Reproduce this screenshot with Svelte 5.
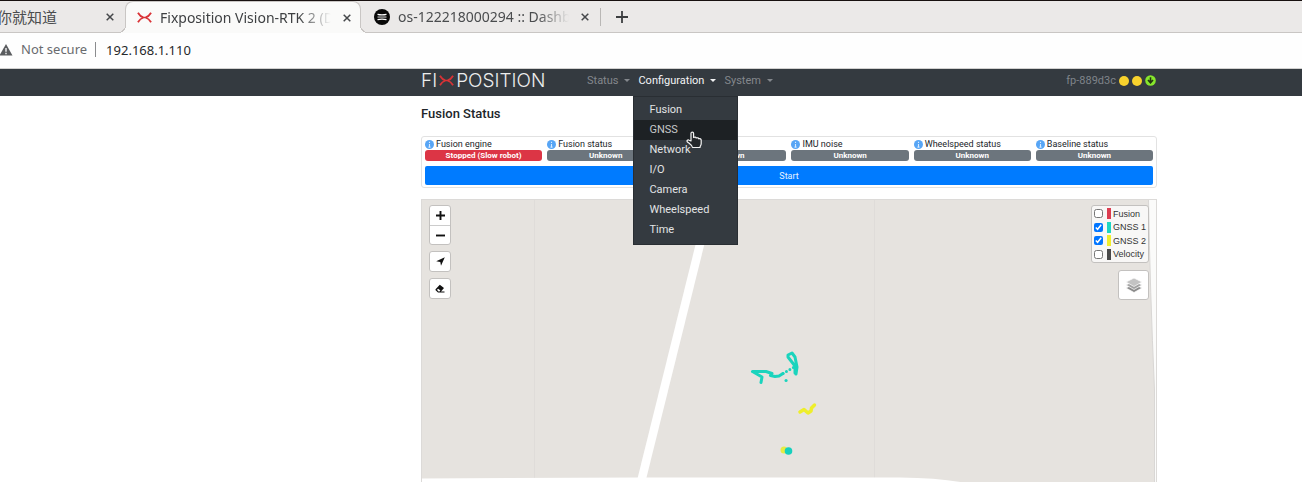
<script>
  const menu = ['Fusion', 'GNSS', 'Network', 'I/O', 'Camera', 'Wheelspeed', 'Time'];
  const cells = [
    { label: 'Fusion engine', value: 'Stopped (Slow robot)', bad: true },
    { label: 'Fusion status', value: 'Unknown' },
    { label: 'IMU bias', value: 'Unknown' },
    { label: 'IMU noise', value: 'Unknown' },
    { label: 'Wheelspeed status', value: 'Unknown' },
    { label: 'Baseline status', value: 'Unknown' }
  ];
  let layers = $state([
    { name: 'Fusion', color: '#dc3d50', on: false },
    { name: 'GNSS 1', color: '#1fd6c1', on: true },
    { name: 'GNSS 2', color: '#f0ee2c', on: true },
    { name: 'Velocity', color: '#494949', on: false }
  ]);
  let active = $state('GNSS');
  let address = $state('192.168.1.110');
</script>

{#snippet cross()}
  <svg width="8" height="8" viewBox="0 0 8 8" aria-hidden="true"><path d="M.7.7l6.6 6.6M7.3.7L.7 7.3" stroke="#45474a" stroke-width="1.5" /></svg>
{/snippet}

{#snippet mark(w, h)}
  <svg width={w} height={h} viewBox="0 0 16 12" preserveAspectRatio="none" aria-hidden="true">
    <path d="M1 .8C2.500 3.500 4.500 5.200 7 6C4.500 6.800 2.500 8.500 1 11.200M15 .8C13.500 3.500 11.500 5.200 9 6C11.500 6.800 13.500 8.500 15 11.200M6 6h4" fill="none" stroke="#d93236" stroke-width="1.900" />
  </svg>
{/snippet}

<div class="page">
  <div class="tabs">
    <div class="tab first">
      <span class="name cjk">你就知道</span>
      <button class="close" aria-label="Close tab">{@render cross()}</button>
    </div>
    <div class="tab current">
      {@render mark(15, 11)}
      <span class="name fade">Fixposition Vision-RTK 2 (Dashboard)</span>
      <button class="close" aria-label="Close tab">{@render cross()}</button>
    </div>
    <div class="tab third">
      <svg width="16" height="16" viewBox="0 0 16 16" aria-hidden="true">
        <circle cx="8" cy="8" r="8" fill="#080808" />
        <path d="M3.500 5.400q4.500 1 9 0M3.500 10.600q4.500-1 9 0" fill="none" stroke="#fff" stroke-width="1.200" />
        <path d="M3.500 7.300h9v1.500h-9z" fill="#999" />
      </svg>
      <span class="name fade">os-122218000294 :: Dashboard</span>
      <button class="close" aria-label="Close tab">{@render cross()}</button>
    </div>
    <button class="new" aria-label="New tab">
      <svg width="12" height="12" viewBox="0 0 12 12" aria-hidden="true"><path d="M6 0v12M0 6h12" stroke="#3c3e40" stroke-width="1.800" /></svg>
    </button>
  </div>

  <div class="toolbar">
    <svg width="13" height="12" viewBox="0 0 13 12" aria-hidden="true">
      <path d="M6 0L12.500 11.500H-.5z" fill="#5a5c5f" /><path d="M6 4v3.800M6 8.800v1.400" stroke="#fff" stroke-width="1.300" />
    </svg>
    <span class="secure">Not secure</span>
    <input class="address" aria-label="Address" bind:value={address} />
  </div>

  <nav class="cols navbar">
    <div class="navrow">
      <a class="brand" href="#home" aria-label="Fixposition">
        <span>FI</span>{@render mark(15, 11)}<span>POSITION</span>
      </a>
      <button class="toggle">Status</button>
      <div class="drop">
        <button class="toggle open">Configuration</button>
        <div class="menu">
          {#each menu as item}
            <a href="#{item}" class:active={active === item} onclick={() => (active = item)}>{item}</a>
          {/each}
          <svg class="hand" width="16" height="18" viewBox="0 0 16 18" aria-hidden="true">
            <path d="M5 10V2.500C5 .6 7.600.6 7.600 2.500V6.500C9 5.700 10 6.200 10.200 7C11.500 6.400 12.600 6.900 12.800 7.800C14 7.300 15.200 8 15.200 9.200V12.500C15.200 14.500 14 15 14 16.500H6.500C6 14 4 13 1.500 11C.3 9.600 1.800 8.400 3.200 9.200z" fill="#25282b" stroke="#f5f5f5" stroke-width="1.200" stroke-linejoin="round" />
          </svg>
        </div>
      </div>
      <button class="toggle">System</button>
      <span class="device">fp-889d3c</span>
      <span class="lights">
        <i></i><i></i>
        <svg width="11" height="11" viewBox="0 0 11 11" aria-hidden="true"><circle cx="5.500" cy="5.500" r="5.300" fill="#86e62c" /><path d="M5.500 2.200v5M3 5l2.500 2.800L8 5" fill="none" stroke="#233411" stroke-width="1.600" /></svg>
      </span>
    </div>
  </nav>

  <main class="cols">
    <div class="content">
      <h1>Fusion Status</h1>
      <section class="panel">
        <div class="grid">
          {#each cells as cell}
            <div>
              <div class="label">
                <svg width="9" height="9" viewBox="0 0 9 9" aria-hidden="true"><circle cx="4.500" cy="4.500" r="4.500" fill="#57a5f5" /><path d="M4.500 1.700v1.200M4.500 4v3.200M3.500 7.100h2" stroke="#d9ebff" stroke-width="1.100" /></svg>
                {cell.label}
              </div>
              <div class="badge" class:bad={cell.bad}>{cell.value}</div>
            </div>
          {/each}
        </div>
        <button class="start">Start</button>
      </section>

      <section class="map" aria-label="Map">
        <svg class="canvas" viewBox="421 200 736 282" preserveAspectRatio="xMidYMin slice" aria-hidden="true">
          <path d="M421 200h736v282H421z" fill="#e6e3df" />
          <path d="M534.500 200v282M874.500 200v282" stroke="#dfdcd9" />
          <path d="M711 200L641 482" stroke="#fff" stroke-width="8.500" />
          <path d="M421 478.500L640 477.500H900Q940 478 966 483H421z" fill="#fff" />
          <path d="M1148.500 200Q1150 290 1154.500 390V482H1157V200z" fill="#fbfbfa" />
          <path d="M1148.500 200Q1150 290 1154.500 390V482" fill="none" stroke="#d9d7d5" />
          <g fill="none" stroke="#1bd4bd" stroke-linecap="round" stroke-linejoin="round" stroke-width="3">
            <path d="M761 382.500L762 377L752.500 371.500L766 371.500L772 373.500L770.500 375.500L775 376.500L779 376L783 373.500M795 373V366L788 357L788 355L792 353L795 357L797 367L796 374" />
            <path d="M783 373.500L794 367" stroke-dasharray="0 4" />
            <path d="M786 380.500h.1" />
          </g>
          <path d="M800 412L804 409.500L808 413L811 411L811.500 408L814.500 405" fill="none" stroke="#eeee2b" stroke-width="3.500" stroke-linecap="round" stroke-linejoin="round" />
          <circle cx="784" cy="450" r="3.500" fill="#e5ec45" /><circle cx="788.500" cy="451" r="3.800" fill="#16d0bd" />
        </svg>
        <div class="left">
          <div class="ctl">
            <button aria-label="Zoom in"><svg width="9" height="9" viewBox="0 0 9 9"><path d="M4.500 0v9M0 4.500h9" stroke="#111" stroke-width="1.900" /></svg></button>
            <button aria-label="Zoom out"><svg width="9" height="9" viewBox="0 0 9 9"><path d="M0 4.500h9" stroke="#111" stroke-width="1.900" /></svg></button>
          </div>
          <div class="ctl"><button aria-label="Locate"><svg width="9" height="9" viewBox="0 0 9 9"><path d="M8.800.2L5 8.800L4.300 4.900L.2 4.200z" fill="#111" /></svg></button></div>
          <div class="ctl"><button aria-label="Erase"><svg width="10" height="9" viewBox="0 0 10 9"><path d="M4.800.8L9 4L6 7.500H9.500V8.500H3L.6 6.200Q.2 5.700.8 5.100z" fill="#111" /><path d="M2 5.800L3.200 4.700L5.400 6.500L4.500 7.500H3.500z" fill="#fff" /></svg></button></div>
        </div>
        <div class="right">
          <div class="legend">
            {#each layers as layer}
              <label><input type="checkbox" bind:checked={layer.on} /><i style:background={layer.color}></i>{layer.name}</label>
            {/each}
          </div>
          <button class="layers" aria-label="Layers">
            <svg width="18" height="18" viewBox="0 0 18 18">
              <path d="M1 12l8 4.500 8-4.500-8-4z" fill="#8b8b8b" stroke="#fff" stroke-width=".7" />
              <path d="M1 9l8 4.500L17 9 9 5z" fill="#a3a3a3" stroke="#fff" stroke-width=".7" />
              <path d="M1 6l8 4.500L17 6 9 2z" fill="#c3c3c3" stroke="#fff" stroke-width=".7" />
            </svg>
          </button>
        </div>
      </section>
    </div>
  </main>
</div>

<style>
  :global(body) { margin: 0; }
  .page { min-height: 100vh; display: flex; flex-direction: column; background: #fff; font-family: Roboto, sans-serif; font-size: 11px; color: #212529; overflow: hidden; }
  button, input { font-family: inherit; font-size: inherit; box-sizing: border-box; margin: 0; }
  button { border: 0; padding: 0; background: none; cursor: pointer; }
  svg { display: block; flex: none; }
  a { text-decoration: none; color: inherit; }

  .tabs { display: flex; height: 33px; box-sizing: border-box; border-top: 1px solid #17100f; background: #ebe9e8; box-shadow: inset 0 -1px #c9c6c4; font-family: "Noto Sans", sans-serif; font-size: 14px; color: #4a4c4e; }
  .tab { display: flex; align-items: center; box-sizing: border-box; height: 32px; }
  .name { flex: 1; min-width: 0; white-space: nowrap; overflow: hidden; line-height: 20px; }
  .fade { mask-image: linear-gradient(90deg, #000 calc(100% - 32px), transparent); }
  .close { width: 16px; height: 16px; display: grid; place-items: center; }
  .first { width: 125px; padding-right: 7px; }
  .cjk { font-family: "Noto Sans CJK SC", sans-serif; font-size: 15px; margin-left: -3px; }
  .current { position: relative; width: 236px; padding: 0 5px 0 11px; border: 1px solid #c9c6c4; border-bottom: 0; border-radius: 8px 8px 0 0; background: #fafaf9; gap: 8px; color: #3e4042; }
  .current::before, .current::after { content: ""; position: absolute; bottom: 0; width: 8px; height: 8px; }
  .current::before { right: 100%; background: radial-gradient(circle at 0 0, #ebe9e8 7px, #c9c6c4 7px 8px, #fafaf9 8px); }
  .current::after { left: 100%; background: radial-gradient(circle at 100% 0, #ebe9e8 7px, #c9c6c4 7px 8px, #fafaf9 8px); }
  .third { width: 232px; padding: 0 0 0 13px; gap: 8px; }
  .new { width: 58px; height: 32px; display: grid; place-items: center; background: linear-gradient(#b9b7b5, #b9b7b5) 7px 50% / 1px 18px no-repeat; }

  .toolbar { display: flex; align-items: center; height: 36px; padding-bottom: 2px; box-sizing: border-box; border-bottom: 1px solid #d2d1d0; background: #fefefe; font-family: "Noto Sans", sans-serif; font-size: 13px; }
  .secure { margin-left: 8px; padding-right: 8px; border-right: 1px solid #8b8c8e; color: #696b6e; line-height: 15px; }
  .address { flex: 1; border: 0; padding: 0 10px; background: none; color: #26282a; outline: 0; }

  .cols { display: grid; grid-template-columns: 421fr 736fr 145fr; }
  .cols > * { grid-column: 2; min-width: 0; }
  .navbar { background: #343a40; height: 27px; color: #7f848a; }
  .navrow { display: flex; align-items: center; height: 23px; }
  .brand { display: flex; align-items: center; gap: 2px; width: 166px; color: #eceded; font-family: Inter, sans-serif; font-weight: 300; font-size: 19px; line-height: 23px; }
  .toggle { display: flex; align-items: center; color: #84888d; line-height: 23px; margin-right: 8px; }
  .toggle::after { content: ""; margin-left: 6px; border: 3px solid transparent; border-top-color: currentColor; border-bottom: 0; }
  .open { color: #f3f4f5; }
  .drop { position: relative; }
  .menu { position: absolute; z-index: 5; top: 27px; left: -5px; width: 105px; box-sizing: border-box; padding: 3px 0 4px; background: #343a40; border: 1px solid #292e33; color: #e2e4e5; }
  .menu a { display: block; padding: 0 15px; line-height: 20px; }
  .menu .active { background: #1d2124; color: #c6c8ca; }
  .hand { position: absolute; left: 52px; top: 34px; }
  .device { margin-left: auto; margin-right: 3px; }
  .lights { display: flex; align-items: center; gap: 3px; margin-right: 1px; }
  .lights i { width: 10px; height: 10px; border-radius: 50%; background: #f8d22d; }

  main { flex: 1; }
  .content { display: flex; flex-direction: column; }
  h1 { margin: 10px 0 14px; font-size: 13px; line-height: 16px; font-weight: 500; }
  .panel { border: 1px solid #e2e2e2; border-radius: 3px; padding: 1px 3px 2px; font-size: 9px; }
  .grid { display: grid; grid-template-columns: repeat(6, 1fr); gap: 5px; }
  .label { display: flex; align-items: center; gap: 2px; line-height: 12px; white-space: nowrap; }
  .badge { border-radius: 3px; background: #6c757d; color: #fff; font-size: 8px; font-weight: 700; line-height: 11px; text-align: center; }
  .bad { background: #dc3545; }
  .start { display: block; width: 100%; height: 19px; margin-top: 5px; background: #007bff; color: #e8f3ff; border-radius: 2px; }
  .map { position: relative; flex: 1; min-height: 280px; margin-top: 11px; border: 1px solid #dcdad8; border-bottom: 0; overflow: hidden; }
  .canvas { position: absolute; inset: 0; width: 100%; height: 100%; }
  .left, .right { position: absolute; top: 5px; display: flex; flex-direction: column; gap: 6px; }
  .left { left: 7px; }
  .right { right: 7px; align-items: flex-end; }
  .ctl, .legend, .layers { border: 1px solid #c3c1bf; border-radius: 3px; background: #fff; }
  .ctl button { display: grid; place-items: center; width: 20px; height: 19px; }
  .ctl button + button { border-top: 1px solid #ccc; }
  .legend { padding: 1px 2px; background: #f8f7f6; font-family: "Liberation Sans", sans-serif; font-size: 9px; color: #333; }
  .legend label { display: flex; align-items: center; height: 14px; }
  .legend label:nth-child(odd) { height: 13px; }
  .legend input { width: 9px; height: 9px; }
  .legend i { width: 4px; height: 11px; margin: 0 2px 0 4px; }
  .layers { display: grid; place-items: center; width: 31px; height: 30px; margin-top: 1px; }
</style>
